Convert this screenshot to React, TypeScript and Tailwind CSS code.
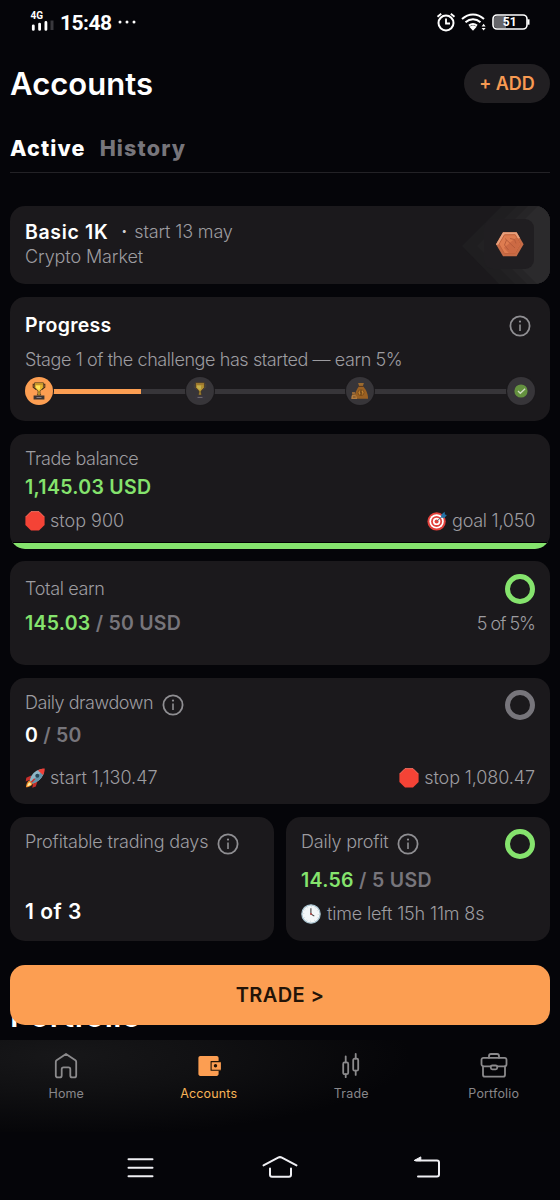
import type { ReactNode } from "react";

const grey = "text-[#9d9ca0] font-light text-[18px] leading-[24px] whitespace-nowrap";
const value = "font-semibold text-[19.5px] leading-[24px] whitespace-nowrap";

function Card({ className, children }: { className: string; children: ReactNode }) {
  return <section className={"overflow-hidden rounded-[15px] bg-[#1b191c] " + className}>{children}</section>;
}

function Info() {
  return (
    <svg className="size-[22px] shrink-0" viewBox="0 0 22 22" fill="none" stroke="#8f8e92">
      <circle cx="11" cy="11" r="9.6" strokeWidth="1.8" />
      <path d="M11 9.4V16" strokeWidth="1.6" />
      <circle cx="11" cy="6.6" r="1.1" fill="#8f8e92" stroke="none" />
    </svg>
  );
}

function Ring({ color }: { color: string }) {
  return (
    <svg className="size-[30px] shrink-0" viewBox="0 0 30 30" fill="none">
      <circle cx="15" cy="15" r="12.5" stroke={color} strokeWidth="5" />
    </svg>
  );
}

function StopSign() {
  return (
    <svg className="size-5 shrink-0" viewBox="0 0 20 20">
      <path d="M6 .4h8L19.6 6v8L14 19.6H6L.4 14V6z" fill="#f44336" />
      <path d="M.6 6 6 .6h8L19.4 6" fill="none" stroke="#fa7b6b" strokeWidth=".8" />
    </svg>
  );
}

function Target() {
  return (
    <svg className="size-5 shrink-0" viewBox="0 0 20 20">
      <circle cx="9.6" cy="10.4" r="9.2" fill="#e2403b" />
      <circle cx="9.6" cy="10.4" r="7.2" fill="#fff" />
      <circle cx="9.6" cy="10.4" r="5.5" fill="#e2403b" />
      <circle cx="9.6" cy="10.4" r="3.7" fill="#fff" />
      <circle cx="9.6" cy="10.4" r="2" fill="#e2403b" />
      <path d="m9.8 10.2 6-5.4" stroke="#5d6b78" strokeWidth="1" />
      <path d="m14 6.5.5-3L17.6.8l.3 2.6 2 .6-2.6 3z" fill="#2474a8" />
    </svg>
  );
}

function Rocket() {
  return (
    <svg className="size-5 shrink-0" viewBox="0 0 20 20">
      <path d="M6.2 7.6 1.3 9.8l-.6 3.6 4.6-1.7zM12.4 13.6l-1.6 5-3.5 1.1.8-5z" fill="#c62f2b" />
      <path d="M5 12.5c-2.8.6-3.7 3.5-4.1 6.8 3.4-.6 6.4-1.4 7-4.4z" fill="#f08a2a" />
      <path d="M4.5 14.3c-1.4.8-2 2.3-2.3 4 1.7-.3 3.4-.8 4.1-2.3z" fill="#fff0a0" />
      <path d="M4.7 12.6c1-5.7 5.5-10.4 11.3-11.3l3 3C17.9 9.4 13.5 14.3 7.8 15.4z" fill="#8fb5c5" />
      <path d="M6.2 14 17.4 3l1.3 1.6C17 9.8 13.4 14.2 7.8 15.4z" fill="#6694aa" />
      <path d="M13 2.4C15.2 1 17.7.4 19.7.5c.1 2-.4 4.4-1.7 6.5z" fill="#ef4038" />
      <circle cx="12.3" cy="7.7" r="2" fill="#29485a" />
      <path d="m6.4 14.3 3.3-3.5" stroke="#d0332e" strokeWidth="1.5" />
    </svg>
  );
}

function Clock() {
  return (
    <svg className="size-5 shrink-0" viewBox="0 0 20 20">
      <circle cx="10" cy="10" r="9.2" fill="#f3f7f9" stroke="#a9c3cf" strokeWidth="1.2" />
      <circle cx="10" cy="10" r="7.3" fill="none" stroke="#aeb8bd" strokeWidth=".8" strokeDasharray=".6 3.22" />
      <path d="M9.9 4.2V10l3.4 2.1" fill="none" stroke="#403b3b" strokeWidth="1.1" />
      <circle cx="10" cy="10" r=".9" fill="#b44" />
    </svg>
  );
}

function Trophy({ dim }: { dim?: boolean }) {
  return (
    <svg className={dim ? "h-[18px] w-[18px] opacity-70" : "h-[18px] w-[18px]"} viewBox="0 0 18 18">
      <path d="M4.5 2.2H3.2v3l3 2.4M13.5 2.2h1.3v3l-3 2.4" fill="none" stroke={dim ? "#4d4743" : "#493018"} strokeWidth="1.1" />
      <path d="M4.6.8h8.8v4.8L10 9.2v2l.8 1.8H7.2l.8-1.8v-2L4.6 5.6z" fill="#e5b62e" stroke="#4a3820" strokeWidth=".8" />
      <path d="M5 1.3h8v1.6H5z" fill="#c9952b" />
      <path d="M6 3.4h4v3.4L9 8.2 6 5.4z" fill="#ffe45b" />
      <path d="M3.6 13.4h10.8v4.2H3.6z" fill={dim ? "#39363f" : "#3a3432"} />
      <path d="M6.5 14.9h5V16h-5z" fill="#817d85" />
    </svg>
  );
}

function MoneyBags() {
  return (
    <svg className="h-[18px] w-[18px]" viewBox="0 0 18 18">
      <path d="M7.1.9h5.8l-1.1 3.5H8.2z" fill="#9b6a2e" />
      <path d="M8.1 4.3h3.8c2 2 5 6 5.2 12.5H3.3C3.4 11.5 6 6.9 8.1 4.3z" fill="#9a6022" />
      <path d="M7.4 4.4h5.2" stroke="#54351f" strokeWidth="1" />
      <circle cx="10" cy="10.6" r="3" fill="#c2822f" stroke="#6f4318" strokeWidth=".8" />
      <path d="M11 8.9H9.3v1.6h1.5v1.7H9M10 8v5.2" fill="none" stroke="#624019" strokeWidth=".8" />
      <path d="M1 10.2h3l-.3 2.2c1.8 1.3 2.4 2.8 2.4 4.6H.3c0-2 .2-3.3 1-4.6z" fill="#b27b3e" />
      <path d="M1 12.2h2.5M2 15h2.6" stroke="#63401d" strokeWidth=".8" />
    </svg>
  );
}

function Node({ on, children }: { on?: boolean; children: ReactNode }) {
  return (
    <div className={"relative flex size-[28px] shrink-0 items-center justify-center rounded-full ring-[1px] ring-[#1b191c] " + (on ? "bg-[#fc9e52]" : "bg-[#373539]")}>
      {children}
    </div>
  );
}

function Hexagon() {
  return (
    <svg className="h-[78px] w-[90px]" viewBox="0 0 90 78">
      <path d="M2 40 39 3l3-3h48v78H39z" fill="#1f1e20" />
      <path d="M17 40 57 0h33v78H55z" fill="#222123" />
      <path d="M34 34 68 0h22v78H67L34 45z" fill="#262527" />
      <path d="M44 34 78 0h12v78H77L44 45z" fill="#2b2a2c" />
      <rect x="24" y="13" width="50" height="50" rx="9" fill="#201e21" />
      <path d="m43 26.3 13.6-.1 7 12-7 12H43l-7-12z" fill="#c66c47" />
      <path d="m43 26.3 13.6-.1L60 32l-23.5 7-.5-.8z" fill="#e8a07c" />
      <path d="m44.5 28.8 10.7-.1 5.4 9.5-5.4 9.4H44.5L39 38.2z" fill="#de7c50" stroke="#c2623b" strokeWidth="1" />
      <path d="m43.8 41.8 12.8-10.5 3.4 6.9-5 8.7h-6.2z" fill="#cc6a44" />
      <path d="m45 32.5 10 9.5M46.5 34l-2 5 4 5M50 32.5l4.5 1 1.5 4" fill="none" stroke="#b65c3b" strokeWidth="1" />
    </svg>
  );
}

function StatusBar() {
  return (
    <div className="flex h-[43px] shrink-0 items-center pl-[30px] pr-[31px]">
      <svg className="mt-[1px] h-[22px] w-[24px]" viewBox="0 0 24 22">
        <text x="0.5" y="8" fill="#fff" fontFamily="Roboto" fontWeight="700" fontSize="10">4G</text>
        <path d="M3.3 14.8v3.6M9.6 13.1v5.3M15.9 11.4v7" stroke="#fff" strokeWidth="2.8" strokeLinecap="round" />
        <path d="M22 9.5v9.5" stroke="#39383d" strokeWidth="3" />
      </svg>
      <span className="ml-[6px] mt-[2px] font-[Roboto] text-[21px] font-bold leading-[24px] tracking-[-0.5px] text-white">15:48</span>
      <svg className="ml-[6px] h-1 w-[19px]" viewBox="0 0 19 4" fill="#fff">
        <circle cx="2" cy="2" r="1.5" /><circle cx="9" cy="2" r="1.5" /><circle cx="16" cy="2" r="1.5" />
      </svg>
      <div className="ml-auto flex translate-x-[1px] items-center">
        <svg className="h-[20px] w-[20px]" viewBox="0 0 20 20" fill="none" stroke="#fff">
          <circle cx="10" cy="11" r="7.5" strokeWidth="2" />
          <path d="M10 6.5v5h4" strokeWidth="1.8" />
          <path d="M1.5 4.8 5.2 1.7M14.8 1.7l3.7 3.1" strokeWidth="1.8" />
        </svg>
        <svg className="ml-[5px] h-[20px] w-[26px]" viewBox="0 0 26 20" fill="none" stroke="#fff" strokeWidth="2">
          <path d="M1 7c6.6-6 15.4-6 22 0M4.5 10.3c4.5-4 10.5-4 15 0M8 13.6c2.6-2.1 5.4-2.1 8 0" />
          <path d="M8.3 14.8c2.5-2 4.9-2 7.4 0L12 18.8z" fill="#fff" stroke="none" />
          <path d="m20.6 14.4 2-2.6 2 2.6zM20.6 16l2 2.6 2-2.6z" fill="#fff" stroke="none" />
        </svg>
        <svg className="ml-[4px] h-[18px] w-[39px]" viewBox="0 0 39 18">
          <path d="M6 3h9v12H6a3 3 0 0 1-3-3V6a3 3 0 0 1 3-3z" fill="#66666a" />
          <rect x="2" y="2" width="34" height="14" rx="4" fill="none" stroke="#fff" strokeWidth="1.6" />
          <path d="M37.5 6.3v5.4" stroke="#fff" strokeWidth="2" />
          <text x="18.7" y="13" textAnchor="middle" fill="#fff" fontFamily="Roboto" fontWeight="700" fontSize="12">51</text>
        </svg>
      </div>
    </div>
  );
}

function NavItem({ label, active, children }: { label: string; active?: boolean; children: ReactNode }) {
  return (
    <div className="flex w-[142.5px] shrink-0 flex-col items-center">
      <svg className="h-7 w-7" viewBox="0 0 28 28" fill="none" stroke="#8b8a8c" strokeWidth="1.8" strokeLinejoin="round" strokeLinecap="round">
        {children}
      </svg>
      <span className={"mt-[6px] text-[12.5px] leading-4 tracking-[0.15px] " + (active ? "text-[#f7b357]" : "text-[#88878a]")}>{label}</span>
    </div>
  );
}

export default function App() {
  return (
    <main className="relative flex h-[1200px] w-[560px] flex-col overflow-hidden bg-[#050509] font-['Inter','Liberation_Sans',sans-serif]">
      <StatusBar />

      <header className="flex h-[81px] shrink-0 items-center justify-between px-[10px]">
        <h1 className="text-[31px] font-semibold leading-9 tracking-[0.05px] text-white">Accounts</h1>
        <button className="flex h-[39px] w-[86px] items-center justify-center rounded-full bg-[#211f22] text-[18px] font-semibold text-[#f79a52]">+ ADD</button>
      </header>

      <nav className="mx-[10px] flex h-[49px] shrink-0 gap-[14px] border-b border-[#232226] pt-[12px] text-[21.5px] font-extrabold leading-6 tracking-[1.15px]">
        <span className="text-white">Active</span>
        <span className="text-[#77757b]">History</span>
      </nav>

      <div className="flex flex-col gap-[13px] px-[10px] pt-[33px]">
        <Card className="flex h-[78px] justify-between pl-[15px]">
          <div className="pt-[14px]">
            <div className="flex">
              <span className={value + " tracking-[0.65px] text-white"}>Basic 1K</span>
              <b className="ml-[13px] w-[13px] text-[18px] leading-6 text-[#d0d0d2]">·</b>
              <span className={grey + " tracking-[-0.15px]"}>start 13 may</span>
            </div>
            <p className={grey + " mt-[1px] tracking-[-0.1px]"}>Crypto Market</p>
          </div>
          <Hexagon />
        </Card>

        <Card className="h-[124px] px-[15px] pt-[15px]">
          <div className="flex h-[26px] items-center justify-between pr-[4px]">
            <h2 className={value + " tracking-[0.3px] text-white"}>Progress</h2>
            <span className="translate-y-[1px]"><Info /></span>
          </div>
          <p className={grey + " mt-[9px] translate-y-[0.5px] tracking-[-0.41px]"}>Stage 1 of the challenge has started — earn 5%</p>
          <div className="mt-[6px] flex items-center">
            <Node on><Trophy /></Node>
            <div className="flex h-[5px] flex-1 bg-[#373539]"><div className="w-[88px] bg-[#fc9e52]" /></div>
            <Node><Trophy dim /></Node>
            <div className="h-[5px] flex-1 bg-[#373539]" />
            <Node><MoneyBags /></Node>
            <div className="h-[5px] flex-1 bg-[#373539]" />
            <Node>
              <svg className="size-[14px]" viewBox="0 0 14 14" fill="none">
                <circle cx="7" cy="7" r="6.6" fill="#64913f" />
                <path d="m4 7.1 2.3 2.1 4.8-4.4" stroke="#cfdcc1" strokeWidth="1.4" />
              </svg>
            </Node>
          </div>
        </Card>

        <Card className="flex h-[115px] flex-col pt-[13px]">
          <p className={grey + " px-[15px] tracking-[-0.45px]"}>Trade balance</p>
          <p className={value + " mt-[4px] px-[15px] tracking-[0.3px] text-[#85e36d]"}>1,145.03 USD</p>
          <div className="mt-[10px] flex justify-between px-[15px]">
            <span className={grey + " flex items-center gap-[5px]"}><StopSign />stop 900</span>
            <span className={grey + " flex items-center gap-[5px] tracking-[-0.25px]"}><Target />goal 1,050</span>
          </div>
          <div className="mt-auto h-[7px] border-t border-black bg-[#85e36d]" />
        </Card>

        <Card className="-mt-[1px] h-[104px] px-[15px] pt-[12px]">
          <div className="flex h-[31px] items-center justify-between">
            <span className={grey + " tracking-[-0.35px]"}>Total earn</span>
            <Ring color="#85e36d" />
          </div>
          <div className="mt-[7px] flex justify-between">
            <span className={value + " tracking-[0.25px] text-[#77757b]"}><span className="text-[#85e36d]">145.03</span> / 50 USD</span>
            <span className={grey + " translate-y-[1px] tracking-[-1px]"}>5 of 5%</span>
          </div>
        </Card>

        <Card className="h-[126px] px-[15px] pt-[12px]">
          <div className="flex h-[30px] items-center">
            <span className={grey + " -mt-[4px] tracking-[-0.45px]"}>Daily drawdown</span>
            <span className="ml-[9px]"><Info /></span>
            <span className="ml-auto"><Ring color="#77757b" /></span>
          </div>
          <p className={value + " mt-[3px] tracking-[0.25px] text-[#77757b]"}><span className="text-white">0</span> / 50</p>
          <div className="mt-[19px] flex justify-between">
            <span className={grey + " flex items-center gap-[5px]"}><Rocket />start 1,130.47</span>
            <span className={grey + " flex items-center gap-[5px] tracking-[-0.1px]"}><StopSign />stop 1,080.47</span>
          </div>
        </Card>

        <div className="grid grid-cols-2 gap-[12px]">
          <Card className="h-[124px] px-[15px] pt-[12px]">
            <div className="flex h-[30px] items-center">
              <span className={grey + " -mt-[4px] tracking-[-0.18px]"}>Profitable trading days</span>
              <span className="ml-[9px]"><Info /></span>
            </div>
            <p className="mt-[41px] text-[21px] font-semibold leading-6 tracking-[0.5px] text-white">1 of 3</p>
          </Card>
          <Card className="h-[124px] px-[15px] pt-[12px]">
            <div className="flex h-[30px] items-center">
              <span className={grey + " -mt-[4px] tracking-[-0.2px]"}>Daily profit</span>
              <span className="ml-[9px]"><Info /></span>
              <span className="ml-auto"><Ring color="#85e36d" /></span>
            </div>
            <p className={value + " mt-[9px] tracking-[0.3px] text-[#77757b]"}><span className="text-[#85e36d]">14.56</span> / 5 USD</p>
            <p className={grey + " mt-[10px] flex items-center gap-[6px] tracking-[-0.15px]"}><Clock />time left 15h 11m 8s</p>
          </Card>
        </div>
      </div>

      <h2 className="mt-[57px] pl-[10px] text-[31px] font-semibold leading-9 tracking-[0.5px] text-white">Portfolio</h2>

      <button className="absolute left-[10px] top-[965px] h-[60px] w-[540px] rounded-[15px] bg-[#fc9e52] text-[20px] font-semibold tracking-[0.4px] text-[#231408]">TRADE &gt;</button>

      <footer className="absolute inset-x-0 bottom-0 flex h-[160px] flex-col bg-[#050509]">
        <div className="flex h-[92px] justify-center bg-[radial-gradient(ellipse_350px_80px_at_60px_16px,#171719_0%,#101012_45%,#050508_100%)] pt-[12px]">
          <NavItem label="Home">
            <path d="M3.8 9.8c0-.7.3-1.1.8-1.5L14 1.9l9.4 6.4c.5.4.8.8.8 1.5v13.6c0 1.2-.7 2-1.9 2h-2.1c-1.2 0-1.9-.8-1.9-2v-6.2c0-1.2-.7-1.9-1.9-1.9h-4.8c-1.2 0-1.9.7-1.9 1.9v6.2c0 1.2-.7 2-1.9 2H5.7c-1.2 0-1.9-.8-1.9-2z" />
          </NavItem>
          <NavItem label="Accounts" active>
            <path d="M5.3 4h16.4c1.1 0 1.9.8 1.9 1.9v3.2h2.3v9.7h-2.3V22c0 1.1-.8 1.9-1.9 1.9H5.3c-1.1 0-1.9-.8-1.9-1.9V5.9C3.4 4.8 4.2 4 5.3 4z" fill="#fc9e52" stroke="none" />
            <path d="M25.8 9.6h-9.7v8.6h9.7" stroke="#211407" strokeWidth="1.1" />
            <circle cx="20.5" cy="13.8" r="1.7" fill="#211407" stroke="none" />
          </NavItem>
          <NavItem label="Trade">
            <rect x="6.2" y="10.4" width="5" height="11.8" rx="1.5" /><path d="M8.7 4.3v6.1M8.7 22.2v3" />
            <rect x="16.2" y="6.7" width="5" height="12" rx="1.5" /><path d="M18.7 1.8v4.9M18.7 18.7v4.2" />
          </NavItem>
          <NavItem label="Portfolio">
            <rect x="1.5" y="5.8" width="25" height="8.5" rx="2" />
            <path d="M3 14.3v8.4c0 1.2.8 2 2 2h18c1.2 0 2-.8 2-2v-8.4M9 5.8V4c0-1.2.8-2 2-2h6c1.2 0 2 .8 2 2v1.8" />
            <rect x="10.8" y="13.5" width="6.4" height="3.8" rx="1.5" fill="#050508" />
          </NavItem>
        </div>
        <div className="flex h-[68px] items-center pl-[120px] pt-[4px]">
          <svg className="h-[28px] w-[320px]" viewBox="0 0 320 28" fill="none" stroke="#efeff3" strokeWidth="2" strokeLinecap="round" strokeLinejoin="round">
            <path d="M8.5 5.2h24M8.5 13.7h24M8.5 22.3h24" />
            <path d="m143.5 11.4 14.6-7.8c1.4-.7 2.4-.7 3.8 0l14.6 7.8M150 14.5v6.3c0 1.2.7 2 2 2h17c1.3 0 2-.8 2-2v-6.3" />
            <path d="M296 6.5h21c1.4 0 2 .7 2 2v12c0 1.3-.7 2-2 2h-19" />
            <path d="m294.5 6.3 6.3-3.4v3.4z" fill="#efeff3" strokeWidth="1" />
          </svg>
        </div>
      </footer>
    </main>
  );
}
